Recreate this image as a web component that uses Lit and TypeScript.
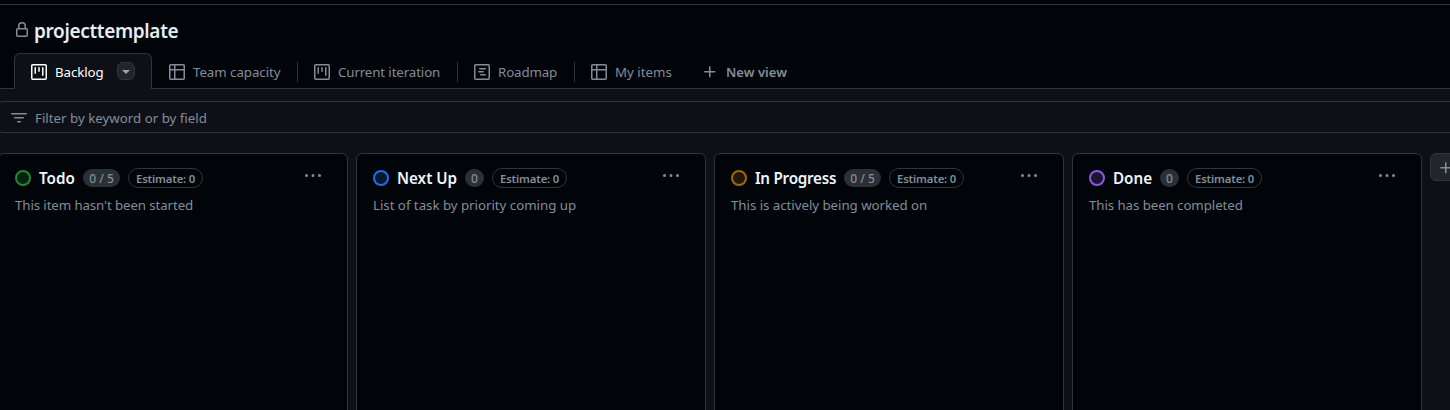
import { LitElement, html, css, svg } from "lit";
import { customElement } from "lit/decorators.js";

const paths: Record<string, string> = {
  lock: "M4 4a4 4 0 0 1 8 0v2h.25c.966 0 1.75.784 1.75 1.75v5.5A1.75 1.75 0 0 1 12.25 15h-8.5A1.75 1.75 0 0 1 2 13.25v-5.5C2 6.784 2.784 6 3.75 6H4Zm8.25 3.5h-8.5a.25.25 0 0 0-.25.25v5.5c0 .138.112.25.25.25h8.5a.25.25 0 0 0 .25-.25v-5.5a.25.25 0 0 0-.25-.25ZM10.5 6V4a2.5 2.5 0 1 0-5 0v2Z",
  board: "M1.75 0h12.5C15.216 0 16 .784 16 1.75v12.5A1.75 1.75 0 0 1 14.25 16H1.75A1.75 1.75 0 0 1 0 14.25V1.75C0 .784.784 0 1.75 0ZM1.5 1.75v12.5c0 .138.112.25.25.25h12.5a.25.25 0 0 0 .25-.25V1.75a.25.25 0 0 0-.25-.25H1.75a.25.25 0 0 0-.25.25ZM11.75 3a.75.75 0 0 1 .75.75v7.5a.75.75 0 0 1-1.5 0v-7.5a.75.75 0 0 1 .75-.75Zm-8.25.75a.75.75 0 0 1 1.5 0v5.5a.75.75 0 0 1-1.5 0ZM8 3a.75.75 0 0 1 .75.75v3.5a.75.75 0 0 1-1.5 0v-3.5A.75.75 0 0 1 8 3Z",
  table: "M0 1.75C0 .784.784 0 1.75 0h12.5C15.216 0 16 .784 16 1.75v12.5A1.75 1.75 0 0 1 14.25 16H1.75A1.75 1.75 0 0 1 0 14.25ZM6.5 6.5v8h7.75a.25.25 0 0 0 .25-.25V6.5Zm8-1.5V1.75a.25.25 0 0 0-.25-.25H6.5V5Zm-13 1.5v7.75c0 .138.112.25.25.25H5v-8ZM5 5V1.5H1.75a.25.25 0 0 0-.25.25V5Z",
  roadmap: "M4.75 7a.75.75 0 0 0 0 1.5h4.5a.75.75 0 0 0 0-1.5h-4.5ZM5 4.75A.75.75 0 0 1 5.75 4h5.5a.75.75 0 0 1 0 1.5h-5.5A.75.75 0 0 1 5 4.75ZM6.75 10a.75.75 0 0 0 0 1.5h4.5a.75.75 0 0 0 0-1.5h-4.5ZM0 1.75C0 .784.784 0 1.75 0h12.5C15.216 0 16 .784 16 1.75v12.5A1.75 1.75 0 0 1 14.25 16H1.75A1.75 1.75 0 0 1 0 14.25Zm1.75-.25a.25.25 0 0 0-.25.25v12.5c0 .138.112.25.25.25h12.5a.25.25 0 0 0 .25-.25V1.75a.25.25 0 0 0-.25-.25Z",
  plus: "M7.75 2a.75.75 0 0 1 .75.75V7h4.25a.75.75 0 0 1 0 1.5H8.5v4.25a.75.75 0 0 1-1.5 0V8.5H2.75a.75.75 0 0 1 0-1.5H7V2.75A.75.75 0 0 1 7.75 2Z",
  filter: "M.75 3h14.5a.75.75 0 0 1 0 1.5H.75a.75.75 0 0 1 0-1.5ZM3 7.75A.75.75 0 0 1 3.75 7h8.5a.75.75 0 0 1 0 1.5h-8.5A.75.75 0 0 1 3 7.75Zm3 4a.75.75 0 0 1 .75-.75h2.5a.75.75 0 0 1 0 1.5h-2.5a.75.75 0 0 1-.75-.75Z",
  kebab: "M8 9a1.5 1.5 0 1 0 0-3 1.5 1.5 0 0 0 0 3ZM1.5 9a1.5 1.5 0 1 0 0-3 1.5 1.5 0 0 0 0 3Zm13 0a1.5 1.5 0 1 0 0-3 1.5 1.5 0 0 0 0 3Z",
  caret: "m4.427 7.427 3.396 3.396a.25.25 0 0 0 .354 0l3.396-3.396A.25.25 0 0 0 11.396 7H4.604a.25.25 0 0 0-.177.427Z",
};

const icon = (name: string, size = 16) =>
  html`<svg class="icon" width=${size} height=${size} viewBox="0 0 16 16">${svg`<path fill="currentColor" fill-rule="evenodd" d=${paths[name]}></path>`}</svg>`;

const label = (text: string, width: number, spacing = 0, cls = "") =>
  html`<span class="label ${cls}" style="width:${width}px;letter-spacing:${spacing}px">${text}</span>`;

interface Tab { icon: string; text: string; width: number; spacing: number }
const tabs: Tab[] = [
  { icon: "table", text: "Team capacity", width: 88, spacing: -0.05 },
  { icon: "board", text: "Current iteration", width: 103, spacing: -0.12 },
  { icon: "roadmap", text: "Roadmap", width: 60, spacing: -0.12 },
  { icon: "table", text: "My items", width: 55, spacing: 0 },
];

interface Column {
  name: string; width: number; spacing: number; count: string; tone: string;
  note: string; noteWidth: number; noteSpacing: number;
}
const columns: Column[] = [
  { name: "Todo", width: 36, spacing: 0, count: "0 / 5", tone: "green", note: "This item hasn't been started", noteWidth: 178, noteSpacing: -0.11 },
  { name: "Next Up", width: 60, spacing: 0, count: "0", tone: "blue", note: "List of task by priority coming up", noteWidth: 203, noteSpacing: -0.03 },
  { name: "In Progress", width: 81, spacing: -0.25, count: "0 / 5", tone: "amber", note: "This is actively being worked on", noteWidth: 196, noteSpacing: -0.04 },
  { name: "Done", width: 39, spacing: 0, count: "0", tone: "purple", note: "This has been completed", noteWidth: 154, noteSpacing: -0.08 },
];

@customElement("app-root")
export class AppRoot extends LitElement {
  static styles = css`
    :host {
      display: flex; flex-direction: column; height: 410px; overflow: hidden;
      background: #0d1117; color: #848d97;
      font: 13.3px/20px "Noto Sans", "Open Sans", sans-serif;
    }
    * { box-sizing: border-box; }
    .icon { display: block; flex: none; }
    .label { display: block; flex: none; white-space: nowrap; }
    .strip { height: 5px; flex: none; background: #010409; border-bottom: 1px solid #30363d; }
    .header { height: 48px; flex: none; background: #010409; display: flex; padding: 16px 0 0 14px; gap: 4px; }
    .title { color: #e6edf3; font-size: 19px; font-weight: 600; line-height: 20px; }
    .header .icon { margin-top: 1px; }
    .tabs { height: 36px; flex: none; display: flex; background: linear-gradient(#30363d, #30363d) bottom / 100% 1px no-repeat #010409; padding-left: 14px; }
    .tab { display: flex; align-items: center; gap: 8px; padding: 2px 16px 0; height: 36px; }
    .active { width: 138px; margin-right: 1px; padding-right: 0; border: 1px solid #30363d; border-bottom: 0; border-radius: 6px 6px 0 0; background: #0d1117; color: #fff; padding-top: 1px; }
    .drop { width: 18px; height: 18px; margin: -3px 0 0 5px; border-radius: 6px; border: 1px solid #30363d; background: #21262d; color: #9ba3ad; display: grid; place-items: center; }
    .sep { width: 1px; height: 20px; margin-top: 9px; background: #30363d; }
    .new { font-size: 13px; font-weight: 600; }
    .filter { height: 32px; flex: none; margin: 12px -8px 0 -3px; border: 1px solid #30363d; border-radius: 6px; display: flex; align-items: center; gap: 8px; padding: 2px 0 0 13px; }
    .board { flex: 1; min-height: 0; margin: 20px 0 0 -2px; display: flex; gap: 8px; }
    .column { width: 350px; height: 270px; flex: none; background: #010409; border: 1px solid #30363d; border-radius: 6px; padding: 14px 16px; }
    .head { display: flex; align-items: center; gap: 8px; height: 20px; }
    .ring { width: 16px; height: 16px; flex: none; border: 2px solid; border-radius: 50%; }
    .green { border-color: #238636; background: #06210f; }
    .blue { border-color: #1f6feb; background: #07182f; }
    .amber { border-color: #9e6a03; background: #211807; }
    .purple { border-color: #8957e5; background: #1d1530; }
    .name { color: #f0f6fc; font-size: 15.2px; font-weight: 600; }
    .count { height: 18px; min-width: 19px; padding: 0 6px; border-radius: 9px; background: #2b3037; font-size: 12px; font-weight: 500; line-height: 19px; text-align: center; }
    .wide { width: 37px; }
    .estimate { width: 75px; height: 20px; border: 1px solid #30363d; border-radius: 10px; font-size: 11.3px; font-weight: 600; letter-spacing: -0.15px; line-height: 19px; padding-left: 7px; white-space: nowrap; }
    .menu { margin: -5px 10px 0 auto; }
    .note { margin-top: 7px; }
    .add { width: 32px; height: 28px; flex: none; border: 1px solid #30363d; border-radius: 6px; background: #21262d; padding: 6px 7px; }
  `;

  render() {
    return html`
      <div class="strip"></div>
      <header class="header">${icon("lock")}${label("projecttemplate", 144, -0.35, "title")}</header>
      <nav class="tabs">
        <div class="tab active">${icon("board")}${label("Backlog", 49, -0.1)}<span class="drop">${icon("caret")}</span></div>
        ${tabs.map((t, i) => html`
          ${i ? html`<span class="sep"></span>` : ""}
          <div class="tab">${icon(t.icon)}${label(t.text, t.width, t.spacing)}</div>`)}
        <div class="tab new">${icon("plus")}${label("New view", 61, 0.03)}</div>
      </nav>
      <div class="filter">${icon("filter")}${label("Filter by keyword or by field", 172)}</div>
      <main class="board">
        ${columns.map((c) => html`
          <section class="column">
            <div class="head">
              <span class="ring ${c.tone}"></span>
              ${label(c.name, c.width, c.spacing, "name")}
              <span class="count ${c.count.length > 1 ? "wide" : ""}">${c.count}</span>
              <span class="estimate">Estimate: 0</span>
              <span class="menu">${icon("kebab")}</span>
            </div>
            <div class="note">${label(c.note, c.noteWidth, c.noteSpacing)}</div>
          </section>`)}
        <div class="add">${icon("plus")}</div>
      </main>`;
  }
}
